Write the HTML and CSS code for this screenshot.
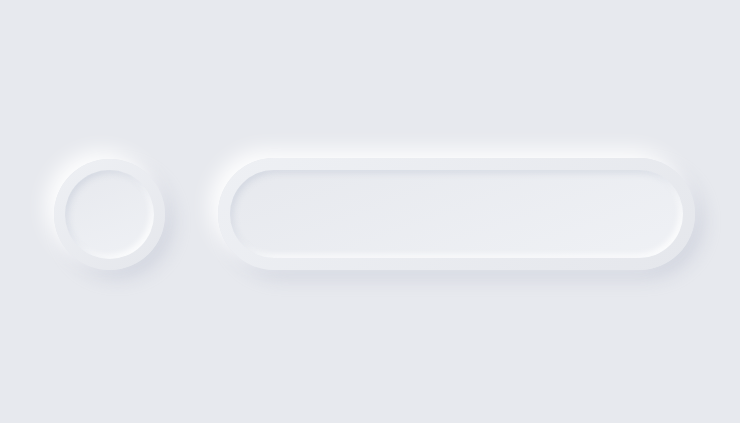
FILE: index.html
```html
<!DOCTYPE html>
<html lang="en">
<head>
    <meta charset="UTF-8">
    <meta name="viewport" content="width=device-width, initial-scale=1.0">
    <title>Neumorphic Controls</title>
    <link rel="stylesheet" href="styles.css">
</head>
<body>
    <div class="stage">
        <div class="knob">
            <div class="knob-well"></div>
        </div>
        <div class="pill">
            <div class="pill-well"></div>
        </div>
    </div>
</body>
</html>
```

FILE: styles.css
```css
body {
    margin: 0;
    padding: 0;
    background-color: #e7e9ee;
    font-family: 'Liberation Sans', Arial, sans-serif;
}

.stage {
    height: 423px;
    display: flex;
    align-items: center;
    padding: 5px 0 0 54px;
    box-sizing: border-box;
    gap: 53px;
}

/* raised surfaces */
.knob, .pill {
    flex: none;
    background: linear-gradient(145deg, #eef0f4, #e5e7ec);
    box-shadow: -8px -8px 20px rgba(255, 255, 255, 0.95),
                8px 8px 18px rgba(165, 172, 192, 0.32);
    padding: 11px;
    box-sizing: border-box;
    display: flex;
}

.knob {
    width: 111px;
    height: 111px;
    border-radius: 50%;
}

.pill {
    width: 477px;
    height: 112px;
    border-radius: 56px;
    padding: 12px;
}

/* pressed wells */
.knob-well, .pill-well {
    flex: 1;
    background: linear-gradient(160deg, #e7e9ee, #eff1f5);
    box-shadow: inset 3px 3px 6px rgba(170, 178, 198, 0.3),
                inset -3px -3px 6px rgba(255, 255, 255, 0.9);
}

.knob-well {
    border-radius: 50%;
}

.pill-well {
    border-radius: 44px;
}
```
